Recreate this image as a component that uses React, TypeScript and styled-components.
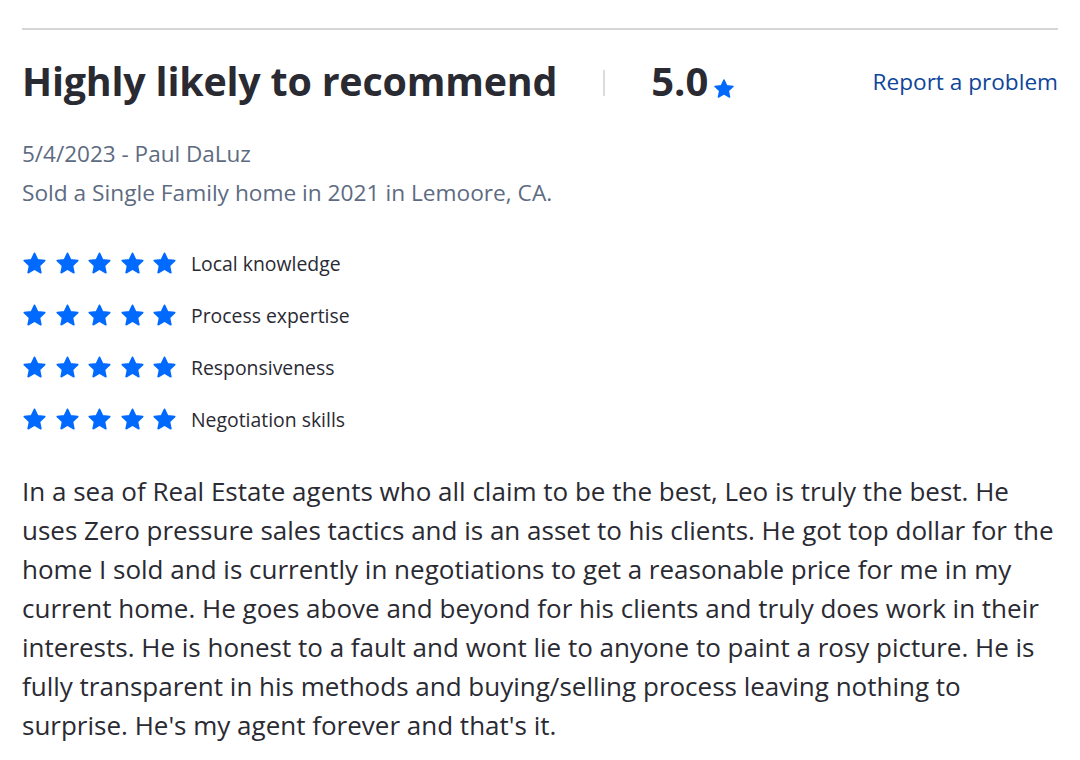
import React from "react";
import styled, { createGlobalStyle } from "styled-components";

const Global = createGlobalStyle`
    body{
        margin: 0;
        background: #fff;
        font-family: "Open Sans", "Noto Sans", sans-serif;
        color: #2a2a33;
    }
`;

const ratings = ["Local knowledge", "Process expertise", "Responsiveness", "Negotiation skills"];

const Star = ({size}: {size: number}) => (
    <svg width={size} height={size} viewBox="0 0 24 24">
        <path fill="#006aff" stroke="#006aff" strokeWidth="1.6" strokeLinejoin="round"
            d="M12 2.2l2.95 6.3 6.85.8-5.07 4.7 1.35 6.8L12 17.4l-6.08 3.4 1.35-6.8L2.2 9.3l6.85-.8z"/>
    </svg>
);

function App(){
    return(
        <>
            <Global/>
            <Review>
                <Header>
                    <Title>Highly likely to recommend</Title>
                    <Divider/>
                    <Score>5.0<Star size={22}/></Score>
                    <Report href="#">Report a problem</Report>
                </Header>
                <Meta>5/4/2023 - Paul DaLuz</Meta>
                <Sold>Sold a Single Family home in 2021 in Lemoore, CA.</Sold>
                <Ratings>
                    {ratings.map(r => (
                        <RatingRow key={r}>
                            <Stars>{[0,1,2,3,4].map(i => <Star key={i} size={25}/>)}</Stars>
                            <span>{r}</span>
                        </RatingRow>
                    ))}
                </Ratings>
                <Body>
                    In a sea of Real Estate agents who all claim to be the best, Leo is truly the best. He uses Zero pressure sales tactics and is an asset to his clients. He got top dollar for the home I sold and is currently in negotiations to get a reasonable price for me in my current home. He goes above and beyond for his clients and truly does work in their interests. He is honest to a fault and wont lie to anyone to paint a rosy picture. He is fully transparent in his methods and buying/selling process leaving nothing to surprise. He's my agent forever and that's it.
                </Body>
            </Review>
        </>
    );
}

export default App;

const Review = styled.div`
    margin: 28px 22px 0;
    border-top: 2px solid #d6d6d6;
    padding-top: 25px;
`;

const Header = styled.div`
    display: flex;
    align-items: center;
    height: 52px;
`;

const Title = styled.h1`
    margin: 0;
    font-size: 39.4px;
    font-weight: 700;
    color: #2a2a33;
    letter-spacing: -0.2px;
`;

const Divider = styled.div`
    width: 2px;
    height: 26px;
    background: #dcdcdc;
    margin: 4px 46px 0 46px;
`;

const Score = styled.div`
    display: flex;
    align-items: flex-end;
    gap: 5px;
    font-size: 40px;
    font-weight: 700;
    line-height: 1;
    svg{ margin-bottom: 1px; }
`;

const Report = styled.a`
    margin-left: auto;
    font-size: 22.6px;
    color: #0d4599;
    text-decoration: none;
`;

const Meta = styled.div`
    margin-top: 32px;
    font-size: 22.5px;
    color: #5d6b82;
    line-height: 30px;
`;

const Sold = styled.div`
    margin-top: 8px;
    font-size: 22.7px;
    color: #5d6b82;
    line-height: 32px;
`;

const Ratings = styled.div`
    margin-top: 42px;
    display: flex;
    flex-direction: column;
    gap: 27px;
`;

const RatingRow = styled.div`
    display: flex;
    align-items: center;
    gap: 14px;
    font-size: 19.4px;
    color: #2a2a33;
    height: 25px;
`;

const Stars = styled.div`
    display: flex;
    gap: 7.5px;
`;

const Body = styled.p`
    margin: 40px 0 0;
    font-size: 26px;
    line-height: 39px;
    color: #2a2a33;
`;
